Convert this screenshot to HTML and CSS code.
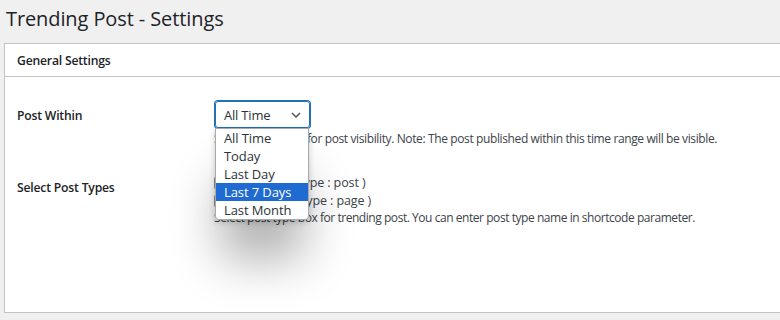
FILE: index.html
```html
<!DOCTYPE html>
<html>
<head>
<meta charset="utf-8">
<link rel="stylesheet" href="styles.css">
</head>
<body>
<div class="wrap">
  <h1 class="title">Trending Post - Settings</h1>
  <div class="postbox">
    <div class="postbox-header"><h2>General Settings</h2></div>
    <div class="inside">
      <div class="form-row row-first">
        <div class="label label-first">Post Within</div>
        <div class="field">
          <div class="select-wrap">
            <div class="select">
              <span>All Time</span>
              <svg class="chev" width="10" height="6" viewBox="0 0 10 6"><path d="M1 1l4 4 4-4" fill="none" stroke="#50575e" stroke-width="1.5"/></svg>
            </div>
            <ul class="dropdown">
              <li>All Time</li>
              <li>Today</li>
              <li>Last Day</li>
              <li class="active">Last 7 Days</li>
              <li>Last Month</li>
            </ul>
          </div>
          <p class="desc">Select time range for post visibility. Note: The post published within this time range will be visible.</p>
        </div>
      </div>
      <div class="form-row row-second">
        <div class="label label-second">Select Post Types</div>
        <div class="field">
          <label class="check"><span class="box"></span>Post ( Post type : post )</label>
          <label class="check"><span class="box"></span>Page ( Post type : page )</label>
          <p class="desc desc-small">Select post type box for trending post. You can enter post type name in shortcode parameter.</p>
        </div>
      </div>
    </div>
  </div>
</div>
</body>
</html>
```

FILE: styles.css
```css
html, body {
  margin: 0;
  padding: 0;
  background: #f0f0f1;
  overflow: hidden;
}
body {
  font-family: "Open Sans", "Noto Sans", sans-serif;
  color: #1d2327;
  width: 780px;
  height: 320px;
}
.wrap {
  padding: 0 0 0 4px;
}
.title {
  margin: 0;
  padding: 5px 0 0 2px;
  font-size: 20px;
  line-height: 28px;
  font-weight: 400;
  letter-spacing: -0.1px;
  color: #1d2327;
}
.postbox {
  margin-top: 10px;
  width: 800px;
  height: 270px;
  box-sizing: border-box;
  background: #fff;
  border: 1px solid #c3c4c7;
}
.postbox-header {
  height: 32px;
  border-bottom: 1px solid #c3c4c7;
  display: flex;
  align-items: center;
  padding-left: 12px;
}
.postbox-header h2 {
  margin: 0;
  font-size: 12.2px;
  font-weight: 600;
  letter-spacing: -0.2px;
  line-height: 18px;
  color: #1d2327;
  position: relative;
  top: 1px;
}
.inside {
  padding: 24px 0 0 12px;
}
.form-row {
  display: grid;
  grid-template-columns: 197px 1fr;
}
.label {
  font-size: 12.2px;
  font-weight: 600;
  letter-spacing: -0.2px;
  line-height: 18px;
  color: #1d2327;
}
.label-first {
  padding-top: 6px;
}
.label-second {
  padding-top: 5px;
}
.row-second {
  margin-top: 26px;
}
.select-wrap {
  position: relative;
  width: 95px;
}
.select {
  box-sizing: border-box;
  width: 95px;
  height: 27px;
  margin-left: 1px;
  border: 1px solid #2271b1;
  box-shadow: 0 0 0 1px #2271b1;
  border-radius: 3px;
  display: flex;
  align-items: center;
  justify-content: space-between;
  padding: 0 8px 0 8px;
  font-size: 13px;
  letter-spacing: -0.2px;
  color: #2c3338;
}
.chev {
  margin-top: 1px;
}
.dropdown {
  position: absolute;
  left: 1px;
  top: 27px;
  width: 94px;
  box-sizing: border-box;
  margin: 0;
  padding: 0;
  list-style: none;
  background: #fff;
  border: 1px solid #a7aaad;
  border-radius: 0 0 4px 4px;
  box-shadow: 0 2px 6px rgba(0,0,0,0.2), 0 45px 50px -6px rgba(0,0,0,0.32);
  z-index: 5;
  font-size: 13px;
  letter-spacing: -0.1px;
  color: #2c3338;
}
.dropdown li {
  height: 18px;
  line-height: 18px;
  padding-left: 8px;
}
.dropdown li.active {
  background: #1f6bd1;
  color: #fff;
}
.desc {
  margin: 2px 0 0 0;
  font-size: 12px;
  letter-spacing: -0.38px;
  line-height: 18px;
  color: #3c434a;
}
.check {
  display: flex;
  align-items: center;
  font-size: 12.5px;
  letter-spacing: -0.1px;
  line-height: 18px;
  height: 18px;
  color: #3c434a;
}
.box {
  width: 12px;
  height: 12px;
  border: 1px solid #8c8f94;
  border-radius: 3px;
  margin-right: 8px;
}
.desc-small {
  margin-top: 0;
  line-height: 16px;
  letter-spacing: -0.45px;
}
```
